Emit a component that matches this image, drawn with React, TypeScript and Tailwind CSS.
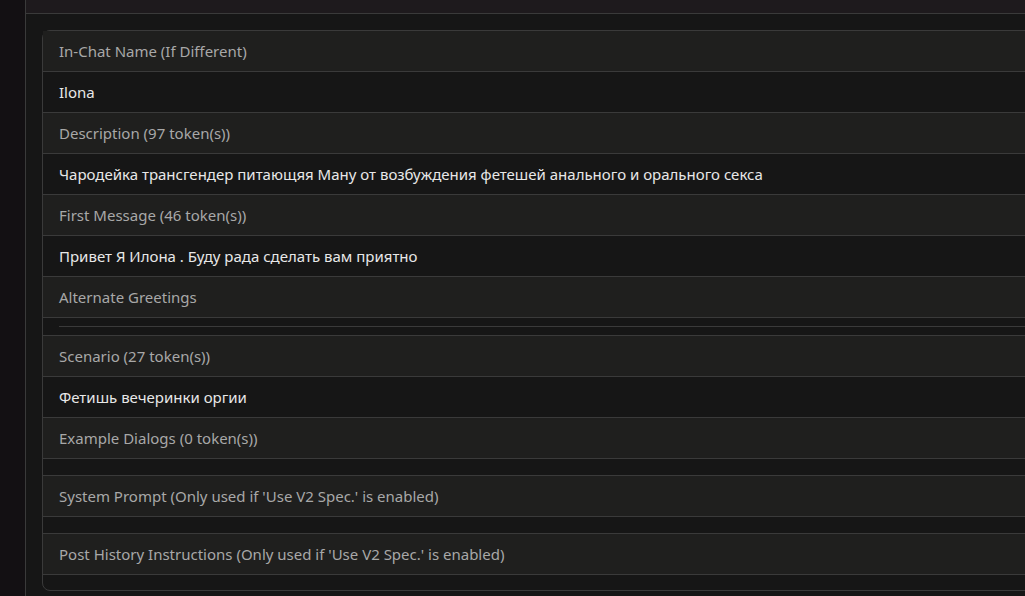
const rows: { label: string; value?: string; gap?: "hr" | "empty" }[] = [
  { label: "In-Chat Name (If Different)", value: "Ilona" },
  { label: "Description (97 token(s))", value: "Чародейка трансгендер питающяя Ману от возбуждения фетешей анального и орального секса" },
  { label: "First Message (46 token(s))", value: "Привет Я Илона . Буду рада сделать вам приятно" },
  { label: "Alternate Greetings", gap: "hr" },
  { label: "Scenario (27 token(s))", value: "Фетишь вечеринки оргии" },
  { label: "Example Dialogs (0 token(s))", gap: "empty" },
  { label: "System Prompt (Only used if 'Use V2 Spec.' is enabled)", gap: "empty" },
  { label: "Post History Instructions (Only used if 'Use V2 Spec.' is enabled)" },
];

export default function App() {
  return (
    <div
      className="flex h-[596px] w-[1025px] overflow-hidden bg-[#131013] text-[15px]"
      style={{ fontFamily: '"Noto Sans", "Open Sans", sans-serif' }}
    >
      <div className="w-[25px] shrink-0" />
      <div className="flex flex-1 flex-col border-l border-[#3a3a3a] bg-[#161616]">
        <div className="h-[14px] shrink-0 border-b border-[#3a3a3a] bg-[#1e1a1d]" />
        <div className="pl-[16px] pt-[16px]">
          <div className="w-[1100px] rounded-tl-lg rounded-bl-lg border border-[#3a3a3a] pb-[15px]">
            {rows.map((r) => (
              <div key={r.label}>
                <div className="flex h-[41px] items-center border-b border-[#3a3a3a] bg-[#1f1f1e] px-4 text-[#a8a8a8]">
                  {r.label}
                </div>
                {r.value && (
                  <div className="flex h-[41px] items-center border-b border-[#3a3a3a] px-4 text-[#e8e8e8]">
                    {r.value}
                  </div>
                )}
                {r.gap === "hr" && (
                  <div className="border-b border-[#3a3a3a] py-2 pl-4">
                    <div className="h-px bg-[#3a3a3a]" />
                  </div>
                )}
                {r.gap === "empty" && <div className="h-[17px] border-b border-[#3a3a3a]" />}
              </div>
            ))}
          </div>
        </div>
      </div>
    </div>
  );
}
